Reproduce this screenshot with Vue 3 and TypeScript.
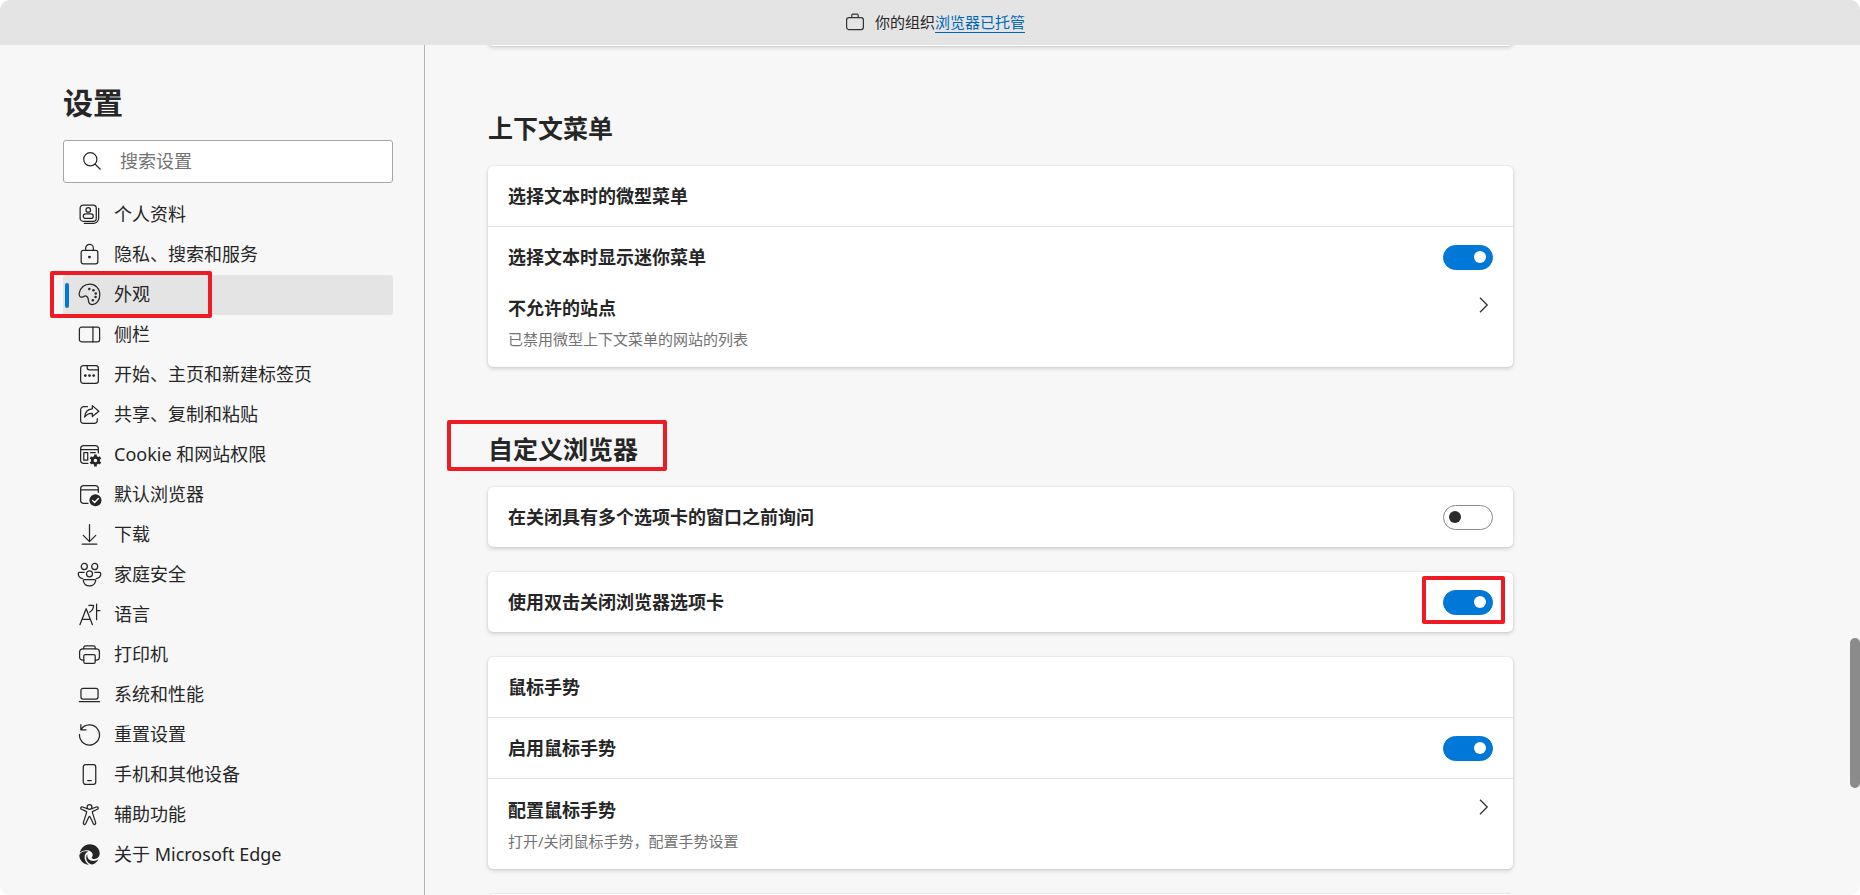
<script setup lang="ts">
import { ref } from 'vue'

interface NavItem {
  id: string
  label: string
}

const navItems: NavItem[] = [
  { id: 'profile', label: '个人资料' },
  { id: 'privacy', label: '隐私、搜索和服务' },
  { id: 'appearance', label: '外观' },
  { id: 'sidebar', label: '侧栏' },
  { id: 'start', label: '开始、主页和新建标签页' },
  { id: 'share', label: '共享、复制和粘贴' },
  { id: 'cookies', label: 'Cookie 和网站权限' },
  { id: 'default', label: '默认浏览器' },
  { id: 'downloads', label: '下载' },
  { id: 'family', label: '家庭安全' },
  { id: 'languages', label: '语言' },
  { id: 'printers', label: '打印机' },
  { id: 'system', label: '系统和性能' },
  { id: 'reset', label: '重置设置' },
  { id: 'phone', label: '手机和其他设备' },
  { id: 'accessibility', label: '辅助功能' },
  { id: 'about', label: '关于 Microsoft Edge' },
]

const current = ref('appearance')
const query = ref('')
const miniMenu = ref(true)
const askBeforeClose = ref(false)
const doubleClickClose = ref(true)
const mouseGesture = ref(true)
</script>

<template>
  <div class="window">
    <header class="banner">
      <svg class="banner-icon" viewBox="0 0 20 20" aria-hidden="true">
        <rect x="1.6" y="5.6" width="16.8" height="12" rx="2.4" />
        <path d="M6.8 5.4V3.2a1 1 0 0 1 1-1h4.400a1 1 0 0 1 1 1v2.200" />
      </svg>
      <p>你的组织<a href="#managed">浏览器已托管</a></p>
    </header>

    <div class="body">
      <aside class="sidebar">
        <h1>设置</h1>
        <label class="search">
          <svg viewBox="0 0 20 20" aria-hidden="true">
            <circle cx="8.300" cy="8.300" r="6.600" />
            <path d="M13 13l5.500 5.500" />
          </svg>
          <input v-model="query" type="text" placeholder="搜索设置" aria-label="搜索设置" />
        </label>

        <nav>
          <a
            v-for="item in navItems"
            :key="item.id"
            class="nav-item"
            :class="{ active: item.id === current }"
            :href="'#' + item.id"
            @click.prevent="current = item.id"
          >
            <svg class="nav-icon" viewBox="0 0 24 24" aria-hidden="true">
              <g v-if="item.id === 'profile'">
                <rect x="3" y="3" width="15.500" height="15.500" rx="3" />
                <circle cx="10.800" cy="7.600" r="2.200" />
                <rect x="6" y="11.400" width="9.600" height="4.400" rx="2.200" />
                <path d="M20.800 6v9.500a5 5 0 0 1-5 5H7" />
              </g>
              <g v-else-if="item.id === 'privacy'">
                <rect x="4" y="8" width="16" height="13" rx="2" />
                <path d="M8.300 8V6a3.700 3.700 0 0 1 7.400 0v2" />
                <circle class="solid" cx="12" cy="14.500" r="1.400" />
              </g>
              <g v-else-if="item.id === 'appearance'">
                <path d="M2.200 10.500C3.200 5.600 7.200 2 12.300 2c5.500 0 9.600 4.400 9.600 10.200 0 5.200-3.100 9.600-7 9.600-2.400 0-3.700-1.800-3.900-4-.2-2.400-.7-3.600-2.100-4.200-1.800-.8-2.900 1-4.500 1-1.700 0-2.700-1.900-2.200-4.100z" />
                <circle class="solid" cx="11.800" cy="6.700" r="1.200" />
                <circle class="solid" cx="15.800" cy="7.800" r="1.200" />
                <circle class="solid" cx="18" cy="11" r="1.200" />
                <circle class="solid" cx="17.800" cy="14.500" r="1.200" />
                <circle class="solid" cx="15.200" cy="17.500" r="1.200" />
              </g>
              <g v-else-if="item.id === 'sidebar'">
                <rect x="2.300" y="5" width="19.400" height="14" rx="2" />
                <path d="M15.300 5v14" />
              </g>
              <g v-else-if="item.id === 'start'">
                <rect x="3.500" y="3.500" width="17" height="17" rx="2.500" />
                <path d="M9.800 3.500v2a2 2 0 0 0 2 2h8.700" />
                <circle class="solid" cx="8" cy="13" r="1.300" />
                <circle class="solid" cx="12" cy="13" r="1.300" />
                <circle class="solid" cx="16" cy="13" r="1.300" />
              </g>
              <g v-else-if="item.id === 'share'">
                <path d="M10 4.500H6.500a3 3 0 0 0-3 3v10a3 3 0 0 0 3 3h10a3 3 0 0 0 3-3v-1.500" />
                <path d="M14.700 3.500l6.300 5.300-6.300 5.200v-3c-3.700-.2-5.700 1.200-7.400 3.500.3-4.700 2.900-7.700 7.400-8z" />
              </g>
              <g v-else-if="item.id === 'cookies'">
                <path d="M10.500 20.500h-4a3 3 0 0 1-3-3v-11a3 3 0 0 1 3-3h11a3 3 0 0 1 3 3v4M3.500 7.300h17" />
                <path d="M6.500 10.300h3.800v7.200H6.500zM13 10.300h4.500" />
                <g class="cog">
                  <circle cx="17.700" cy="17.700" r="3" />
                  <path d="M17.700 12v3M17.700 20.400v3M12.800 14.900l2.500 1.400M20.100 19.100l2.500 1.400M12.800 20.500l2.500-1.400M20.100 16.300l2.500-1.400" />
                </g>
              </g>
              <g v-else-if="item.id === 'default'">
                <path d="M10.500 20.500h-4a3 3 0 0 1-3-3v-11a3 3 0 0 1 3-3h11a3 3 0 0 1 3 3v3.500M3.500 7.500h17" />
                <circle class="solid" cx="17.700" cy="17.500" r="5.800" />
                <path class="knockout" d="M15 17.700l1.900 1.900 3.600-3.700" />
              </g>
              <g v-else-if="item.id === 'downloads'">
                <path d="M12 2.500v16M6 12.800l6 6 6-6M5 21.300h14" />
              </g>
              <g v-else-if="item.id === 'family'">
                <circle cx="7" cy="4.300" r="2.900" />
                <circle cx="17" cy="4.300" r="2.900" />
                <circle cx="12" cy="11.300" r="2.900" />
                <path d="M5.500 16C3 15.300 1.200 13.500 1.200 11.200c0-.8.400-1.200 1.100-1.200h4.500M18.500 16c2.500-.7 4.300-2.500 4.300-4.800 0-.8-.4-1.200-1.100-1.200h-4.500" />
                <path d="M7.200 16.800h9.600c.9 0 1.300.5 1.100 1.400-.6 2.900-2.900 4.800-5.900 4.800s-5.300-1.900-5.900-4.800c-.2-.9.200-1.400 1.100-1.400z" />
              </g>
              <g v-else-if="item.id === 'languages'">
                <path d="M2.800 21.800L8.800 6.500l6 15.300M4.800 16.700h8M11.300 3.200h4.500c.1 3-1.200 5.200-3.700 6.600M18.800 2v15M18.800 8.300H22" />
              </g>
              <g v-else-if="item.id === 'printers'">
                <path d="M6.500 17.500h-1a3 3 0 0 1-3-3v-5a3 3 0 0 1 3-3h13a3 3 0 0 1 3 3v5a3 3 0 0 1-3 3h-1" />
                <path d="M6.500 6.500V5.300c0-.9.700-1.600 1.600-1.600h7.800c.9 0 1.600.7 1.600 1.600v1.200" />
                <rect x="6.500" y="12" width="11" height="8.500" rx="1.500" />
              </g>
              <g v-else-if="item.id === 'system'">
                <rect x="3.800" y="6" width="16.400" height="10.400" rx="2" />
                <path d="M2.300 18.900h19.400" />
              </g>
              <g v-else-if="item.id === 'reset'">
                <path d="M3.700 2.500v5h5M3.900 7.300A9.600 9.600 0 1 1 2.400 12" />
              </g>
              <g v-else-if="item.id === 'phone'">
                <rect x="6" y="2.500" width="12" height="19" rx="2.200" />
                <path d="M10.300 17.800h3.400" />
              </g>
              <g v-else-if="item.id === 'accessibility'">
                <circle cx="12" cy="4.700" r="2.300" />
                <path d="M9.800 6.300L5.400 4.800c-1.700-.6-2.600 1.500-1 2.200l4.400 2c.5.300.6.700.4 1.200l-3.100 9.600c-.5 1.700 1.600 2.500 2.300.9l3.100-6.600c.2-.5.800-.5 1 0l3.100 6.600c.7 1.600 2.800.8 2.300-.9l-3.100-9.600c-.2-.5-.1-.9.400-1.200l4.400-2c1.600-.7.700-2.800-1-2.200l-4.400 1.500" />
              </g>
              <g v-else class="edge">
                <path d="M2.600 10.500C3.700 5.600 7.500 2.200 12.200 2.200c5.500 0 9.600 3.900 9.600 8.700 0 3.300-2.200 5.400-5.100 5.400-1.600 0-2.600-.6-2.600-1.200 0-.6 1-1 1-2.700 0-2.600-2.700-4.600-6.100-4.600-2.600 0-4.900 1-6.400 2.700z" />
                <path d="M2.200 12.500c1-2.300 3.300-3.700 6.200-3.700.9 0 1.700.1 2.400.4-2.300.9-3.500 3-3.500 5.500 0 3 1.600 5.700 4 7.100-5.200-.1-9.100-4.300-9.100-9.300z" />
                <path d="M10 11.500c-.8 3.700 1.800 6.700 6 6.700 1.700 0 3.200-.5 4.600-1.300-1.400 2.600-3.600 4.300-6.200 4.800-3.300-.8-5.600-3.500-5.600-6.800 0-1.300.4-2.500 1.200-3.400z" />
              </g>
            </svg>
            <span>{{ item.label }}</span>
            <i v-if="item.id === 'appearance'" class="mark mark-nav"></i>
          </a>
        </nav>
      </aside>

      <main class="content">
        <div class="card card-end"></div>

        <section>
          <h2>上下文菜单</h2>
          <div class="card">
            <div class="row"><h3>选择文本时的微型菜单</h3></div>
            <label class="row ruled">
              <span class="row-title">选择文本时显示迷你菜单</span>
              <input v-model="miniMenu" class="toggle" type="checkbox" role="switch" />
            </label>
            <a class="row link-row snug" href="#blocked-sites">
              <span>
                <span class="row-title">不允许的站点</span>
                <span class="row-note">已禁用微型上下文菜单的网站的列表</span>
              </span>
              <svg class="chevron" viewBox="0 0 10 16" aria-hidden="true"><path d="M1 .8l7.200 7.200L1 15.200" /></svg>
            </a>
          </div>
        </section>

        <section>
          <h2><span class="marked">自定义浏览器<i class="mark mark-heading"></i></span></h2>
          <div class="card">
            <label class="row">
              <span class="row-title">在关闭具有多个选项卡的窗口之前询问</span>
              <input v-model="askBeforeClose" class="toggle" type="checkbox" role="switch" />
            </label>
          </div>
          <div class="card">
            <label class="row">
              <span class="row-title">使用双击关闭浏览器选项卡</span>
              <span class="marked">
                <input v-model="doubleClickClose" class="toggle" type="checkbox" role="switch" />
                <i class="mark mark-toggle"></i>
              </span>
            </label>
          </div>
          <div class="card">
            <div class="row"><h3>鼠标手势</h3></div>
            <label class="row ruled">
              <span class="row-title">启用鼠标手势</span>
              <input v-model="mouseGesture" class="toggle" type="checkbox" role="switch" />
            </label>
            <a class="row link-row ruled" href="#mouse-gesture">
              <span>
                <span class="row-title">配置鼠标手势</span>
                <span class="row-note">打开/关闭鼠标手势，配置手势设置</span>
              </span>
              <svg class="chevron" viewBox="0 0 10 16" aria-hidden="true"><path d="M1 .8l7.200 7.200L1 15.200" /></svg>
            </a>
          </div>
          <div class="card"><div class="row"></div></div>
        </section>
      </main>
    </div>
    <div class="scroll-thumb" aria-hidden="true"></div>
  </div>
</template>

<style>
body {
  margin: 0;
  background: #fff;
}
</style>

<style scoped>
* {
  box-sizing: border-box;
}

.window {
  position: relative;
  display: flex;
  flex-direction: column;
  height: 100vh;
  overflow: hidden;
  border-radius: 10px;
  background: #f7f7f7;
  color: #262626;
  font-family: "Noto Sans", "Noto Sans CJK SC", sans-serif;
  font-size: 18px;
  line-height: 24px;
}

.banner {
  flex: none;
  display: flex;
  align-items: center;
  justify-content: center;
  gap: 10px;
  height: 45px;
  padding: 0 0 2px 10px;
  background: #e4e4e4;
  font-size: 15px;
  line-height: 20px;
}

.banner p {
  margin: 0;
}

.banner a {
  border-bottom: 1px solid #0067b8;
  color: #0067b8;
  text-decoration: none;
}

.banner-icon {
  width: 20px;
  height: 20px;
  fill: none;
  stroke: #333;
  stroke-width: 1.2;
}

.body {
  flex: 1;
  display: flex;
  min-height: 0;
}

.sidebar {
  flex: none;
  width: 425px;
  padding: 38px 31px 0 63px;
  border-right: 1px solid #b3b3b3;
}

h1 {
  margin: 0 0 17px;
  font-size: 30px;
  line-height: 40px;
}

.search {
  display: flex;
  align-items: center;
  gap: 18px;
  height: 43px;
  margin-bottom: 12px;
  padding: 0 18px 2px;
  border: 1px solid #a6a6a6;
  border-radius: 3px;
  background: #fff;
}

.search svg {
  flex: none;
  width: 20px;
  height: 20px;
  fill: none;
  stroke: #262626;
  stroke-width: 1.2;
}

.search input {
  flex: 1;
  min-width: 0;
  padding: 0;
  border: 0;
  outline: 0;
  background: none;
  color: #262626;
  font: inherit;
}

.search input::placeholder {
  color: #737373;
  opacity: 1;
}

.nav-item {
  position: relative;
  display: flex;
  align-items: center;
  gap: 12px;
  height: 40px;
  padding: 0 0 2px 14px;
  border-radius: 3px;
  color: inherit;
  text-decoration: none;
}

.nav-item.active {
  background: #e4e4e4;
}

.nav-item.active::before {
  content: "";
  position: absolute;
  top: 8px;
  left: 2px;
  width: 4px;
  height: 25px;
  border-radius: 2px;
  background: #0078d4;
}

.nav-icon {
  flex: none;
  width: 25px;
  height: 25px;
  fill: none;
  stroke: #262626;
  stroke-width: 1.2;
  stroke-linecap: round;
  stroke-linejoin: round;
}

.nav-icon .solid,
.nav-icon .edge {
  fill: #262626;
  stroke: none;
}

.nav-icon .knockout {
  stroke: #fff;
  stroke-width: 1.4;
}

.nav-icon .cog {
  stroke-width: 2.6;
  stroke-linecap: butt;
}

.content {
  flex: 1;
  min-width: 0;
  overflow: hidden;
  padding: 0 63px;
}

h2 {
  margin: 65px 0 21px;
  font-size: 25px;
  line-height: 34px;
}

h3 {
  margin: 0;
  font-size: 18px;
  line-height: 24px;
}

.card {
  max-width: 1025px;
  border-radius: 5px;
  background: #fff;
  box-shadow: 0 2px 4px rgba(0, 0, 0, 0.14), 0 0 2px rgba(0, 0, 0, 0.14);
}

.card + .card {
  margin-top: 25px;
}

/* Last row of the preceding group, scrolled out of view */
.card-end {
  height: 60px;
  margin-top: -59px;
}

.row {
  display: flex;
  align-items: center;
  justify-content: space-between;
  min-height: 60px;
  padding: 0 20px;
}

.ruled {
  min-height: 61px;
  border-top: 1px solid #e5e5e5;
}

.row-title {
  font-weight: 700;
}

.link-row {
  align-items: flex-start;
  padding: 19px 24px 18px 20px;
  color: inherit;
  text-decoration: none;
}

.link-row.snug {
  padding-top: 9px;
}

.link-row .row-title,
.link-row .row-note {
  display: block;
}

.row-note {
  margin-top: 9px;
  color: #737373;
  font-size: 15px;
  line-height: 20px;
}

.chevron {
  flex: none;
  width: 10px;
  height: 16px;
  margin-top: 1px;
  fill: none;
  stroke: #333;
  stroke-width: 1.3;
}

.toggle {
  appearance: none;
  display: block;
  flex: none;
  width: 50px;
  height: 25px;
  margin: 0;
  padding: 5px;
  border: 1px solid #8a8a8a;
  border-radius: 13px;
  background: #fff;
}

.toggle::before {
  content: "";
  display: block;
  width: 12px;
  height: 12px;
  border-radius: 50%;
  background: #2b2b2b;
}

.toggle:checked {
  border-color: #0078d7;
  background: #0078d7;
}

.toggle:checked::before {
  margin-left: 25px;
  background: #fff;
}

.marked {
  position: relative;
}

/* Red call-out frames laid over the highlighted controls */
.mark {
  position: absolute;
  border: 4px solid #ed1c24;
  border-radius: 2px;
  pointer-events: none;
}

.mark-nav {
  top: -4px;
  left: -13px;
  width: 162px;
  height: 47px;
}

.mark-heading {
  inset: -12px -29px -5px -41px;
}

.mark-toggle {
  inset: -14px -12px -9px -21px;
}

.scroll-thumb {
  position: absolute;
  top: 638px;
  right: 0;
  width: 10px;
  height: 150px;
  border-radius: 5px;
  background: #8b8b8b;
}
</style>
